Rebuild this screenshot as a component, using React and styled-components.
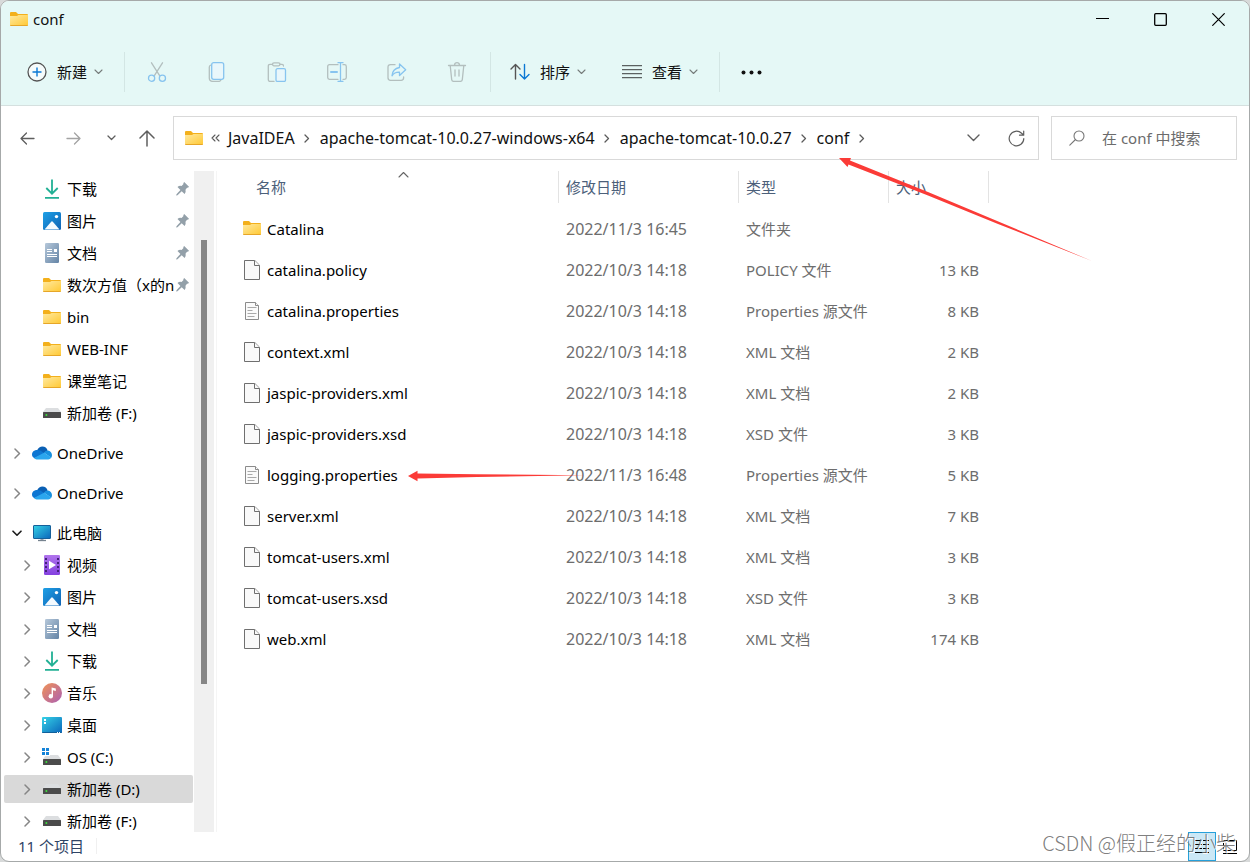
import React from "react";
import styled, { createGlobalStyle } from "styled-components";

const GlobalStyle = createGlobalStyle`
    * {
        box-sizing: border-box;
    }
    body {
        margin: 0;
        background: #d8dada;
        font-family: "Noto Sans", "Noto Sans CJK SC", sans-serif;
        font-size: 15px;
        line-height: 20px;
        color: #111;
    }
    button, input {
        font: inherit;
        color: inherit;
    }
`;

const Window = styled.div`
    position: relative;
    display: flex;
    flex-direction: column;
    height: 100vh;
    border: 1px solid #a6a9a9;
    border-radius: 9px;
    background: #fff;
    overflow: hidden;
`;

const Header = styled.header`
    background: #e5f8f6;
    border-bottom: 1px solid #d5e0df;
`;

const TitleBar = styled.div`
    display: flex;
    align-items: center;
    height: 36px;
    padding: 0 2px 0 9px;
`;

const Title = styled.h1`
    flex: 1;
    margin: 0 0 0 5px;
    font-size: 15px;
    font-weight: 400;
`;

const PlainButton = styled.button`
    display: flex;
    flex: none;
    align-items: center;
    justify-content: center;
    padding: 0;
    border: 0;
    background: none;
`;

const CaptionButton = styled(PlainButton)`
    width: 58px;
    height: 36px;
    color: #000;
`;

const ToolBar = styled.div`
    display: flex;
    align-items: center;
    height: 68px;
    padding: 2px 0 0 16px;
`;

const MenuButton = styled(PlainButton)`
    gap: 10px;
    height: 40px;
    margin-right: ${(p) => p.$after || 0}px;
    padding: 0 10px;

    span {
        margin-right: -3px;
    }
`;

const ToolButton = styled(PlainButton)`
    width: 60px;
    height: 40px;
`;

const Separator = styled.span`
    width: 1px;
    height: 40px;
    margin: 0 ${(p) => p.$after || 2}px 0 ${(p) => p.$before || 2}px;
    background: #d3e6e4;
`;

const AddressRow = styled.div`
    display: flex;
    align-items: center;
    padding: 10px 12px 11px 0;
`;

const NavButtons = styled.nav`
    display: flex;
    width: 172px;
    padding-left: 8px;
`;

const NavButton = styled(PlainButton)`
    width: ${(p) => p.$width}px;
    height: 36px;
    color: ${(p) => (p.disabled ? "#a3a3a3" : "#5e5e5e")};
`;

const AddressBar = styled.div`
    display: flex;
    flex: 1;
    align-items: center;
    height: 44px;
    margin-right: 12px;
    padding-left: 11px;
    border: 1px solid #d9d9d9;
`;

const Crumbs = styled.ol`
    display: flex;
    flex: 1;
    align-items: center;
    margin: 0;
    padding: 0;
    font-size: 16px;
    list-style: none;

    li {
        display: flex;
        align-items: center;
    }
    a {
        padding-bottom: 1px;
        color: #111;
        text-decoration: none;
        white-space: nowrap;
    }
`;

const CrumbArrow = styled.span`
    display: flex;
    justify-content: center;
    width: 25px;
    color: #5a5a5a;
`;

const SearchBox = styled.label`
    display: flex;
    align-items: center;
    gap: 17px;
    width: 186px;
    height: 44px;
    padding: 0 12px 0 17px;
    border: 1px solid #d9d9d9;

    input {
        flex: 1;
        min-width: 0;
        padding: 0;
        border: 0;
        outline: 0;
        background: none;
    }
    input::placeholder {
        color: #6b6b6b;
        opacity: 1;
    }
`;

const Body = styled.div`
    display: flex;
    flex: 1;
    min-height: 0;
`;

const Tree = styled.ul`
    width: 193px;
    margin: 0;
    padding: 2px 1px 0 3px;
    list-style: none;
    overflow: hidden;
`;

const TreeRow = styled.li`
    margin-top: ${(p) => (p.$spaced ? 8 : 0)}px;
    padding: 2px 0;
`;

const TreeItem = styled.button`
    display: flex;
    align-items: center;
    width: 100%;
    height: 28px;
    padding: 0 4px 0 ${(p) => (p.$root ? 8 : 18)}px;
    border: 0;
    border-radius: 2px;
    background: ${(p) => (p.$selected ? "#d9d9d9" : "none")};
    color: #000;
    text-align: left;
`;

const Twisty = styled.span`
    display: flex;
    justify-content: center;
    width: 10px;
    margin-right: 10px;
    color: ${(p) => (p.$open ? "#1b1b1b" : "#868686")};
`;

const IconSlot = styled.span`
    display: flex;
    justify-content: center;
    width: 20px;
    margin-right: 5px;
`;

const TreeLabel = styled.span`
    flex: 1;
    min-width: 0;
    overflow: hidden;
    white-space: nowrap;
`;

const ScrollTrack = styled.div`
    display: flex;
    flex-direction: column;
    align-items: center;
    width: 20px;
    background: #f0f0f0;
`;

const ScrollSpace = styled.span`
    flex: ${(p) => p.$share} 1 0;
`;

const ScrollThumb = styled.span`
    flex: 444 1 0;
    width: 6px;
    background: #868686;
`;

const Files = styled.main`
    flex: 1;
    margin-left: 2px;
    padding-left: 24px;
    border-left: 1px solid #f5f5f5;
    overflow: hidden;
`;

const FileTable = styled.table`
    table-layout: fixed;
    width: 748px;
    border-collapse: collapse;
    color: #6d6d6d;

    th, td {
        padding: 0;
        font-weight: 400;
        text-align: left;
        white-space: nowrap;
    }
    th {
        height: 38px;
        vertical-align: top;
        color: #4c607a;
    }
    td {
        height: 41px;
        padding: 0 0 2px 8px;
    }
    td:first-child {
        padding-left: 2px;
    }
    td:nth-child(2) {
        font-size: 16px;
    }
    td:last-child {
        padding: 0 10px 2px 0;
        text-align: right;
    }
`;

const HeadCell = styled.div`
    position: relative;
    display: flex;
    align-items: center;
    height: 32px;
    padding-left: ${(p) => (p.$first ? 15 : 7)}px;
    border-left: ${(p) => (p.$first ? 0 : 1)}px solid #e3e3e3;
    border-right: ${(p) => (p.$last ? 1 : 0)}px solid #e3e3e3;
`;

const SortMark = styled.span`
    position: absolute;
    top: 0;
    left: 0;
    right: 0;
    display: flex;
    justify-content: center;
    padding-left: 8px;
    color: #666;
`;

const FileName = styled.span`
    display: flex;
    align-items: center;
    gap: 6px;
    color: #000;
`;

const FileIcon = styled.span`
    display: flex;
    justify-content: center;
    width: 18px;
`;

const StatusBar = styled.footer`
    display: flex;
    align-items: center;
    justify-content: space-between;
    height: 29px;
    padding: 0 5px 0 17px;
    color: #2f4466;
`;

const Count = styled.span`
    margin-bottom: 2px;
    padding-right: 12px;
    border-right: 1px solid #f0f0f0;
    line-height: 16px;
`;

const ViewButtons = styled.div`
    display: flex;
`;

const ViewButton = styled(PlainButton)`
    width: 28px;
    height: 29px;
    border: 1px solid ${(p) => (p.$active ? "#26a0da" : "transparent")};
    background: ${(p) => (p.$active ? "#cbe8f6" : "none")};
    color: #000;
`;

const Mark = styled.div`
    position: absolute;
    right: 13px;
    bottom: 3px;
    font-family: "Noto Sans CJK SC", sans-serif;
    font-size: 20px;
    font-weight: 300;
    line-height: 30px;
    color: rgba(110, 110, 110, 0.9);
    text-shadow: 1px 1px 0 #fff;
    pointer-events: none;
`;

const Arrow = styled.svg`
    position: absolute;
    top: ${(p) => p.$top}px;
    left: ${(p) => p.$left}px;
    pointer-events: none;
`;

/* Icons */

const Stroke = ({ w, h, d, color = "currentColor", width = 1.3 }) => (
    <svg width={w} height={h} viewBox={`0 0 ${w} ${h}`} fill="none" stroke={color} strokeWidth={width} strokeLinecap="round" strokeLinejoin="round">
        <path d={d} />
    </svg>
);

const ChevronSmall = () => <Stroke w={9} h={6} d="M1 1l3.5 3.5L8 1" color="#767c7b" width={1.1} />;
const ChevronRight = () => <Stroke w={7} h={11} d="M1 1l4.5 4.5L1 10" width={1.5} />;
const ChevronDown = () => <Stroke w={10} h={7} d="M1 1.2l4 4 4-4" width={1.6} />;

const Folder = () => (
    <svg width="18" height="15" viewBox="0 0 18 15">
        <defs>
            <linearGradient id="folderFront" x1="0" y1="0" x2="1" y2="1">
                <stop offset="0" stopColor="#ffe9a0" />
                <stop offset="1" stopColor="#ffc935" />
            </linearGradient>
        </defs>
        <path d="M0 1Q0 0 1 0h5l2 2h9q1 0 1 1v3H0z" fill="#f3b01c" />
        <path d="M0 4h7l1.5-1H18v10.5H0z" fill="url(#folderFront)" />
        <path d="M0 13h18q0 1-1 1H1q-1 0-1-1z" fill="#e6a628" />
    </svg>
);

const Download = () => (
    <svg width="16" height="20" viewBox="0 0 16 20" fill="none" stroke="#21b094" strokeWidth="1.8">
        <path d="M8 .5v14M2.3 9l5.7 5.7L13.7 9M1 18.8h14" />
    </svg>
);

const Picture = () => (
    <svg width="18" height="18" viewBox="0 0 18 18">
        <defs>
            <linearGradient id="pictureSky" x1="0" y1="0" x2="1" y2="1">
                <stop offset="0" stopColor="#1ea0e6" />
                <stop offset="1" stopColor="#0f62b4" />
            </linearGradient>
        </defs>
        <rect width="18" height="18" rx="1.5" fill="url(#pictureSky)" />
        <path d="M1.5 17.5L8.2 9.8q.8-.9 1.6 0l6.7 7.7z" fill="#f4faff" />
        <circle cx="13.5" cy="4.6" r="1.7" fill="#fff" />
    </svg>
);

const Document = () => (
    <svg width="14" height="20" viewBox="0 0 14 20">
        <defs>
            <linearGradient id="docPaper" x1="0" y1="0" x2="1" y2="1">
                <stop offset="0" stopColor="#b6c8da" />
                <stop offset="1" stopColor="#6484a6" />
            </linearGradient>
        </defs>
        <rect width="14" height="20" rx="1.3" fill="url(#docPaper)" />
        <path d="M2 6.5h5M2 8.5h5M2 11.5h10M2 13.5h10" stroke="#fff" />
        <rect x="9" y="6" width="3" height="3" fill="#fff" />
    </svg>
);

const Drive = ({ system }) => (
    <svg width="20" height={system ? 18 : 12} viewBox={system ? "0 -6 20 18" : "0 0 20 12"}>
        <path d="M4 1h12l3 4H1z" fill="#dcdee0" />
        <rect x="1" y="5" width="18" height="6" rx=".5" fill="#4b4b4b" />
        <circle cx="4.4" cy="8" r="1" fill="#3be23b" />
        {system && (
            <>
                <rect x="-1" y="-6" width="9" height="8" fill="#fff" />
                <path d="M0-6h3v3H0zM4-6h3v3H4zM0-2h3v3H0zM4-2h3v3H4z" fill="#1583d8" />
            </>
        )}
    </svg>
);

const Cloud = () => (
    <svg width="20" height="14" viewBox="0 0 20 14">
        <path d="M5 4.5C6.2 1.8 8.2.5 10.4.5c2.5 0 4.5 1.6 5.2 4L9.5 9z" fill="#0a5fb4" />
        <path d="M4.8 4Q7 3.5 9 5l4 2.5L2.5 12.3C1 11.6 0 10.2 0 8.600 0 6 2.2 4.1 4.8 4z" fill="#0d76d2" />
        <path d="M12 6.8q1.5-2.5 4-2.3 3.5.5 4 4.5 0 1.5-.8 2.7z" fill="#1790df" />
        <path d="M2 12.1L12 6.7l7.4 4.8q-1.2 1.9-3.2 1.9H4.6q-1.5 0-2.6-1.3z" fill="#2aa6ee" />
    </svg>
);

const Computer = () => (
    <svg width="18" height="17" viewBox="0 0 18 17">
        <defs>
            <linearGradient id="screen" x1="0" y1="0" x2="1" y2="1">
                <stop offset="0" stopColor="#35d2e6" />
                <stop offset="1" stopColor="#0b66bb" />
            </linearGradient>
        </defs>
        <path d="M7.5 13h3v2h-3z" fill="#9aa7b3" />
        <rect x=".5" y=".5" width="17" height="13" rx=".5" fill="url(#screen)" stroke="#16609a" />
        <path d="M5 15.5h8" stroke="#76838f" strokeWidth="1.3" />
    </svg>
);

const Video = () => (
    <svg width="16" height="20" viewBox="0 0 16 20">
        <defs>
            <linearGradient id="film" x1="0" y1="0" x2="0" y2="1">
                <stop offset="0" stopColor="#b074ec" />
                <stop offset="1" stopColor="#8440e0" />
            </linearGradient>
        </defs>
        <rect width="16" height="20" rx="1.3" fill="url(#film)" />
        <path d="M2 3v15M14 3v15" stroke="#43217a" strokeWidth="2" strokeDasharray="2 2" />
        <path d="M5 5.8l7 4.2-7 4.2z" fill="#fff" />
    </svg>
);

const Music = () => (
    <svg width="20" height="20" viewBox="0 0 20 20">
        <defs>
            <linearGradient id="disc" x1="0" y1="0" x2="1" y2="1">
                <stop offset="0" stopColor="#f19355" />
                <stop offset="1" stopColor="#ab5fb4" />
            </linearGradient>
        </defs>
        <circle cx="10" cy="10" r="10" fill="url(#disc)" />
        <circle cx="8.8" cy="13.3" r="2.2" fill="#fff" />
        <path d="M9.6 4.5l4.2 1v2.4L11 7.3v6H9.6z" fill="#fff" />
    </svg>
);

const Desktop = () => (
    <svg width="20" height="16" viewBox="0 0 20 16">
        <rect width="20" height="16" rx="1" fill="url(#screen)" />
        <path d="M2 2h2v2H2zM2 5h2v2H2z" fill="#fff" />
        <path d="M0 15h20q0 1-1 1H1q-1 0-1-1z" fill="#11609a" />
        <path d="M15 15.5h1M17 15.5h1" stroke="#fff" />
    </svg>
);

const Pin = () => (
    <svg width="13" height="14" viewBox="0 0 13 14" fill="#93a0a9">
        <path d="M8.200 0L13 4.800Q12.300 6 11 5.800L9.500 7.700Q10.200 10 8.600 12L5.700 9.200 1.500 13.200.1 13.600.5 12.200 4.400 7.900 1.500 5Q3.300 3.400 5.500 4L7.300 2.200Q7.100.9 8.200 0z" />
    </svg>
);

const Page = () => (
    <svg width="16" height="20" viewBox="0 0 16 20" fill="#f9f9f9" stroke="#6f6f6f">
        <path d="M.5.5h10.3l4.7 4.7v14.3H.5z" />
        <path d="M10.5.5v5h5" />
    </svg>
);

const TextPage = () => (
    <svg width="14" height="18" viewBox="0 0 14 18" fill="#fafafa" stroke="#8b8b8b">
        <path d="M.5.5h10l3 3v14H.5z" />
        <path d="M10.5.5v3h3" />
        <path d="M2.5 5.5h9M2.5 8.5h5M2.5 11.5h9M2.5 14.5h7" stroke="#a9a9a9" />
    </svg>
);

const grey = "#b3bfbe";
const blue = "#87c4ef";

const ToolIcon = ({ children }) => (
    <svg width="20" height="20" viewBox="0 0 20 20" fill="none" stroke={grey} strokeWidth="1.3" strokeLinecap="round" strokeLinejoin="round">
        {children}
    </svg>
);

const tools = [
    {
        label: "剪切",
        icon: (
            <ToolIcon>
                <path d="M4.5.8l8.3 13M15.5.8l-8.3 13" />
                <circle cx="4.6" cy="16.2" r="3.1" stroke={blue} />
                <circle cx="15.4" cy="16.2" r="3.1" stroke={blue} />
            </ToolIcon>
        ),
    },
    {
        label: "复制",
        icon: (
            <ToolIcon>
                <path d="M4 3Q2.3 3.5 2.3 5v11q0 3.4 3.4 3.4h6q1.8 0 2.3-1.5" />
                <rect x="4.7" y=".7" width="12" height="16.6" rx="2" stroke={blue} fill="#e9f7fb" />
            </ToolIcon>
        ),
    },
    {
        label: "粘贴",
        icon: (
            <ToolIcon>
                <path d="M5.5 2.3H3Q1.3 2.3 1.3 4v13.7q0 1.7 1.7 1.7h4M13 2.3h2q1.5 0 1.5 1.7" />
                <rect x="5.5" y=".8" width="7.5" height="3" rx="1.5" />
                <rect x="9" y="6.7" width="9.5" height="12.7" rx="1.5" stroke={blue} fill="#e9f7fb" />
            </ToolIcon>
        ),
    },
    {
        label: "重命名",
        icon: (
            <ToolIcon>
                <path d="M11 2.7H2.5Q.7 2.7.7 4.5v11q0 1.8 1.8 1.8H11M16 2.7h1.5q1.8 0 1.8 1.8v11q0 1.8-1.8 1.8H16" />
                <path d="M11 .7h5M11 19.3h5M13.5.7v18.6" stroke={blue} />
                <path d="M4 10h6" stroke={blue} strokeWidth="2" />
            </ToolIcon>
        ),
    },
    {
        label: "共享",
        icon: (
            <ToolIcon>
                <path d="M8 2.7H3.5Q1 2.7 1 5.2v10.6q0 2.5 2.5 2.5h10.6q2.5 0 2.5-2.5V15" />
                <path d="M12.5 2l6.2 5.7-6.2 5.8V10.2Q7.5 10 5 13.8q.4-7 7.5-8.3z" stroke={blue} />
            </ToolIcon>
        ),
    },
    {
        label: "删除",
        icon: (
            <ToolIcon>
                <path d="M1.5 3.5h17M3.2 3.5L4.7 17.6q.2 1.8 2 1.8h6.6q1.8 0 2-1.8L16.8 3.5M7.5 3Q7.8.7 10 .7T12.5 3M8 8v6M12 8v6" />
            </ToolIcon>
        ),
    },
];

const treeItems = [
    { label: "下载", icon: <Download />, pinned: true },
    { label: "图片", icon: <Picture />, pinned: true },
    { label: "文档", icon: <Document />, pinned: true },
    { label: "数次方值（x的n", icon: <Folder />, pinned: true },
    { label: "bin", icon: <Folder /> },
    { label: "WEB-INF", icon: <Folder /> },
    { label: "课堂笔记", icon: <Folder /> },
    { label: "新加卷 (F:)", icon: <Drive /> },
    { label: "OneDrive", icon: <Cloud />, root: true, branch: true },
    { label: "OneDrive", icon: <Cloud />, root: true, branch: true },
    { label: "此电脑", icon: <Computer />, root: true, branch: true, open: true },
    { label: "视频", icon: <Video />, branch: true },
    { label: "图片", icon: <Picture />, branch: true },
    { label: "文档", icon: <Document />, branch: true },
    { label: "下载", icon: <Download />, branch: true },
    { label: "音乐", icon: <Music />, branch: true },
    { label: "桌面", icon: <Desktop />, branch: true },
    { label: "OS (C:)", icon: <Drive system />, branch: true },
    { label: "新加卷 (D:)", icon: <Drive />, branch: true, selected: true },
    { label: "新加卷 (F:)", icon: <Drive />, branch: true },
];

const files = [
    { name: "Catalina", date: "2022/11/3 16:45", type: "文件夹", size: "", icon: <Folder /> },
    { name: "catalina.policy", date: "2022/10/3 14:18", type: "POLICY 文件", size: "13 KB", icon: <Page /> },
    { name: "catalina.properties", date: "2022/10/3 14:18", type: "Properties 源文件", size: "8 KB", icon: <TextPage /> },
    { name: "context.xml", date: "2022/10/3 14:18", type: "XML 文档", size: "2 KB", icon: <Page /> },
    { name: "jaspic-providers.xml", date: "2022/10/3 14:18", type: "XML 文档", size: "2 KB", icon: <Page /> },
    { name: "jaspic-providers.xsd", date: "2022/10/3 14:18", type: "XSD 文件", size: "3 KB", icon: <Page /> },
    { name: "logging.properties", date: "2022/11/3 16:48", type: "Properties 源文件", size: "5 KB", icon: <TextPage /> },
    { name: "server.xml", date: "2022/10/3 14:18", type: "XML 文档", size: "7 KB", icon: <Page /> },
    { name: "tomcat-users.xml", date: "2022/10/3 14:18", type: "XML 文档", size: "3 KB", icon: <Page /> },
    { name: "tomcat-users.xsd", date: "2022/10/3 14:18", type: "XSD 文件", size: "3 KB", icon: <Page /> },
    { name: "web.xml", date: "2022/10/3 14:18", type: "XML 文档", size: "174 KB", icon: <Page /> },
];

const path = ["JavaIDEA", "apache-tomcat-10.0.27-windows-x64", "apache-tomcat-10.0.27", "conf"];

export default function App() {
    return (
        <>
            <GlobalStyle />
            <Window>
                <Header>
                    <TitleBar>
                        <Folder />
                        <Title>conf</Title>
                        <CaptionButton aria-label="最小化">
                            <Stroke w={13} h={13} d="M.5 5.5h12" width={1.2} />
                        </CaptionButton>
                        <CaptionButton aria-label="最大化">
                            <svg width="13" height="13" viewBox="0 0 13 13" fill="none" stroke="currentColor" strokeWidth="1.3">
                                <rect x=".7" y=".7" width="11.6" height="11.6" rx="1" />
                            </svg>
                        </CaptionButton>
                        <CaptionButton aria-label="关闭">
                            <Stroke w={13} h={13} d="M.7.7l11.6 11.6M12.3.7L.7 12.3" width={1.2} />
                        </CaptionButton>
                    </TitleBar>
                    <ToolBar>
                        <MenuButton>
                            <svg width="20" height="20" viewBox="0 0 20 20" fill="none">
                                <circle cx="10" cy="10" r="9" fill="#f5fbfb" stroke="#555" strokeWidth="1.3" />
                                <path d="M5.5 10h9M10 5.5v9" stroke="#0a78d4" strokeWidth="1.4" />
                            </svg>
                            <span>新建</span>
                            <ChevronSmall />
                        </MenuButton>
                        <Separator $before={11} />
                        {tools.map((tool) => (
                            <ToolButton key={tool.label} aria-label={tool.label} disabled>
                                {tool.icon}
                            </ToolButton>
                        ))}
                        <Separator $before={3} $after={9} />
                        <MenuButton $after={16}>
                            <svg width="20" height="18" viewBox="0 0 20 18" fill="none" strokeWidth="1.4" strokeLinecap="round" strokeLinejoin="round">
                                <path d="M5.5 16V1.5M1 6l4.5-4.5L10 6" stroke="#555" />
                                <path d="M14.5 1.5V16M10 11.5l4.5 4.5 4.5-4.5" stroke="#0a78d4" />
                            </svg>
                            <span>排序</span>
                            <ChevronSmall />
                        </MenuButton>
                        <MenuButton>
                            <svg width="20" height="14" viewBox="0 0 20 14" fill="none" stroke="#5b6161" strokeWidth="1.2">
                                <path d="M0 .6h20M0 4.6h20M0 8.6h20M0 12.6h20" />
                            </svg>
                            <span>查看</span>
                            <ChevronSmall />
                        </MenuButton>
                        <Separator $before={11} $after={1} />
                        <ToolButton aria-label="更多">
                            <svg width="21" height="5" viewBox="0 0 21 5" fill="#111">
                                <circle cx="2.5" cy="2.5" r="2" />
                                <circle cx="10.5" cy="2.5" r="2" />
                                <circle cx="18.5" cy="2.5" r="2" />
                            </svg>
                        </ToolButton>
                    </ToolBar>
                </Header>

                <AddressRow>
                    <NavButtons>
                        <NavButton $width={36} aria-label="后退">
                            <Stroke w={15} h={13} d="M14 6.5H1M6.5 1L1 6.5 6.5 12" />
                        </NavButton>
                        <NavButton $width={56} aria-label="前进" disabled>
                            <Stroke w={15} h={13} d="M1 6.5h13M8.5 1L14 6.5 8.5 12" />
                        </NavButton>
                        <NavButton $width={20} aria-label="最近浏览的位置">
                            <Stroke w={9} h={6} d="M1 1l3.5 3.5L8 1" />
                        </NavButton>
                        <NavButton $width={51} aria-label="上移">
                            <Stroke w={16} h={17} d="M8 16V1M1 8l7-7 7 7" width={1.5} />
                        </NavButton>
                    </NavButtons>
                    <AddressBar>
                        <Folder />
                        <Crumbs>
                            <li>
                                <CrumbArrow>
                                    <Stroke w={9} h={8} d="M4 1L1 4l3 3M8 1L5 4l3 3" width={1.1} />
                                </CrumbArrow>
                            </li>
                            {path.map((name) => (
                                <li key={name}>
                                    <a href="#">{name}</a>
                                    <CrumbArrow>
                                        <Stroke w={6} h={9} d="M1 1l3.5 3.5L1 8" />
                                    </CrumbArrow>
                                </li>
                            ))}
                        </Crumbs>
                        <NavButton $width={43} aria-label="以前的位置">
                            <Stroke w={13} h={8} d="M1 1l5.5 5.5L12 1" width={1.4} />
                        </NavButton>
                        <NavButton $width={43} aria-label="刷新">
                            <Stroke w={17} h={17} d="M15.8 8.5a7.3 7.3 0 1 1-2.2-5.2L15.5 5M15.7 1v4.2h-4.2" width={1.2} />
                        </NavButton>
                    </AddressBar>
                    <SearchBox>
                        <Stroke w={16} h={16} d="M6.5 9.5L.8 15.2M15 6a5 5 0 1 1-10 0a5 5 0 1 1 10 0z" color="#777" width={1.1} />
                        <input type="text" aria-label="搜索" placeholder="在 conf 中搜索" />
                    </SearchBox>
                </AddressRow>

                <Body>
                    <Tree>
                        {treeItems.map((item, i) => (
                            <TreeRow key={i} $spaced={item.root}>
                                <TreeItem $root={item.root} $selected={item.selected}>
                                    <Twisty $open={item.open}>
                                        {item.branch && (item.open ? <ChevronDown /> : <ChevronRight />)}
                                    </Twisty>
                                    <IconSlot>{item.icon}</IconSlot>
                                    <TreeLabel>{item.label}</TreeLabel>
                                    {item.pinned && <Pin />}
                                </TreeItem>
                            </TreeRow>
                        ))}
                    </Tree>
                    <ScrollTrack>
                        <ScrollSpace $share={69} />
                        <ScrollThumb />
                        <ScrollSpace $share={148} />
                    </ScrollTrack>
                    <Files>
                        <FileTable>
                            <colgroup>
                                <col width="317" />
                                <col width="180" />
                                <col width="150" />
                                <col width="101" />
                            </colgroup>
                            <thead>
                                <tr>
                                    <th>
                                        <HeadCell $first>
                                            名称
                                            <SortMark>
                                                <Stroke w={11} h={7} d="M1 6l4.5-4.5L10 6" width={1.1} />
                                            </SortMark>
                                        </HeadCell>
                                    </th>
                                    <th><HeadCell>修改日期</HeadCell></th>
                                    <th><HeadCell>类型</HeadCell></th>
                                    <th><HeadCell $last>大小</HeadCell></th>
                                </tr>
                            </thead>
                            <tbody>
                                {files.map((file) => (
                                    <tr key={file.name}>
                                        <td>
                                            <FileName>
                                                <FileIcon>{file.icon}</FileIcon>
                                                {file.name}
                                            </FileName>
                                        </td>
                                        <td>{file.date}</td>
                                        <td>{file.type}</td>
                                        <td>{file.size}</td>
                                    </tr>
                                ))}
                            </tbody>
                        </FileTable>
                    </Files>
                </Body>

                <StatusBar>
                    <Count>11 个项目</Count>
                    <ViewButtons>
                        <ViewButton $active aria-label="详细信息">
                            <svg width="15" height="14" viewBox="0 0 15 14" stroke="currentColor">
                                <path d="M0 .5h7M8 .5h6M0 4.5h7M8 4.5h6M0 8.5h7M8 8.5h6M0 12.5h14" />
                            </svg>
                        </ViewButton>
                        <ViewButton aria-label="大图标">
                            <svg width="14" height="14" viewBox="0 0 14 14" fill="none" stroke="currentColor">
                                <path d="M.5.5h13v10H.5zM0 13.5h14" />
                            </svg>
                        </ViewButton>
                    </ViewButtons>
                </StatusBar>

                <Arrow $top={156} $left={837} width="255" height="105" viewBox="0 0 255 105" fill="#fb3b37">
                    <path d="M1 1L13 1 12 3.5 90 35 254 104 160 67 90 38.5 10.5 7.5 9.5 10z" />
                </Arrow>
                <Arrow $top={469} $left={406} width="180" height="12" viewBox="0 0 180 12" fill="#fb3b37">
                    <path d="M1 6L10.5.8V3.5L70 4.3 178 5.3 70 7 10.5 8.5V11.2z" />
                </Arrow>
                <Mark>CSDN @假正经的小柴</Mark>
            </Window>
        </>
    );
}
